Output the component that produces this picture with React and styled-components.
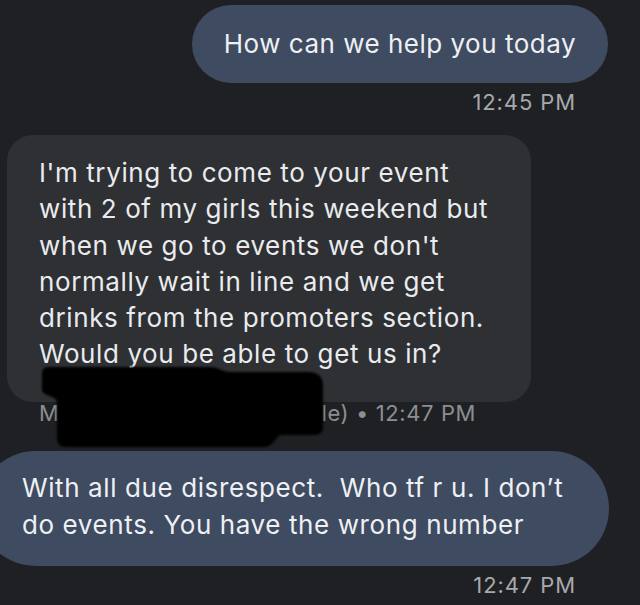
import React from 'react'
import styled, { createGlobalStyle } from 'styled-components'

const GlobalStyle = createGlobalStyle`
  html, body {
    margin: 0;
    padding: 0;
    background: #1f2023;
  }
  body {
    font-family: Inter, Roboto, "Noto Sans", Arial, sans-serif;
    -webkit-font-smoothing: antialiased;
  }
`

const Thread = styled.div`
  position: relative;
  width: 640px;
  height: 605px;
  overflow: hidden;
  background: #1f2023;
  display: flex;
  flex-direction: column;
`

const OutRow = styled.div`
  display: flex;
  justify-content: flex-end;
  padding-right: ${props => props.right}px;
  margin-top: ${props => props.top}px;
`

const OutBubble = styled.div`
  background: #3e4b60;
  color: #eef0f4;
  border-radius: 58px;
  font-size: 26px;
  line-height: ${props => props.lh}px;
  letter-spacing: ${props => props.spacing}px;
  padding: ${props => props.pad};
  width: ${props => props.width ? props.width + 'px' : 'auto'};
  margin-left: ${props => props.left || 0}px;
  box-sizing: border-box;
  white-space: nowrap;
`

const InBubble = styled.div`
  margin: 20px 0 0 7px;
  width: 524px;
  box-sizing: border-box;
  background: #2e3033;
  color: #e9ebee;
  border-radius: 26px;
  padding: 20px 10px 29px 32px;
  font-size: 26px;
  line-height: 36.3px;
  letter-spacing: 0.6px;
  white-space: nowrap;
`

const Time = styled.div`
  align-self: flex-end;
  margin-right: 64px;
  margin-top: ${props => props.top}px;
  color: #a7a9ad;
  font-size: 22px;
  line-height: 26px;
  letter-spacing: 0.9px;
`

const Meta = styled.div`
  display: flex;
  margin-left: 39px;
  color: #8c8e92;
  font-size: 22px;
  line-height: 22px;
  letter-spacing: 0.6px;
  white-space: pre;
`

const Gap = styled.span`
  display: inline-block;
  width: ${props => props.width}px;
`

const Redaction = styled.svg`
  position: absolute;
  left: 36px;
  top: 362px;
`

const Line = styled.div``

const incoming = [
  "I'm trying to come to your event",
  'with 2 of my girls this weekend but',
  "when we go to events we don't",
  'normally wait in line and we get',
  'drinks from the promoters section.',
  'Would you be able to get us in?',
]

export default function App() {
  return (
    <>
      <GlobalStyle />
      <Thread>
        <OutRow right={32} top={5}>
          <OutBubble lh={36} spacing={0.5} pad="21px 32px">
            How can we help you today
          </OutBubble>
        </OutRow>
        <Time top={6}>12:45 PM</Time>

        <InBubble>
          {incoming.map((t, i) => <Line key={i}>{t}</Line>)}
        </InBubble>
        <Meta>M<Gap width={262} />le) • 12:47 PM</Meta>

        <OutRow right={31} top={27}>
          <OutBubble lh={37} spacing={0.6} pad="18px 10px 23px 44px" width={631} left={-22}>
            <Line>With all due disrespect.&nbsp; Who tf r u. I don’t</Line>
            <Line>do events. You have the wrong number</Line>
          </OutBubble>
        </OutRow>
        <Time top={6}>12:47 PM</Time>

        <Redaction width="296" height="94" viewBox="0 0 296 94">
          <defs>
            <filter id="soft" x="-5%" y="-10%" width="110%" height="120%">
              <feGaussianBlur stdDeviation="1.2" />
            </filter>
          </defs>
          <path
            d="M12 5 L175 5 C182 5 186 10 195 10 L272 10 Q287 10 287 24 L287 66 Q287 73 278 73 L246 73 C240 73 238 85 228 85 L30 85 Q21 85 21 76 L21 40 C21 34 6 34 6 28 L6 12 Q6 5 12 5 Z"
            fill="#040404"
            filter="url(#soft)"
          />
        </Redaction>
      </Thread>
    </>
  )
}
